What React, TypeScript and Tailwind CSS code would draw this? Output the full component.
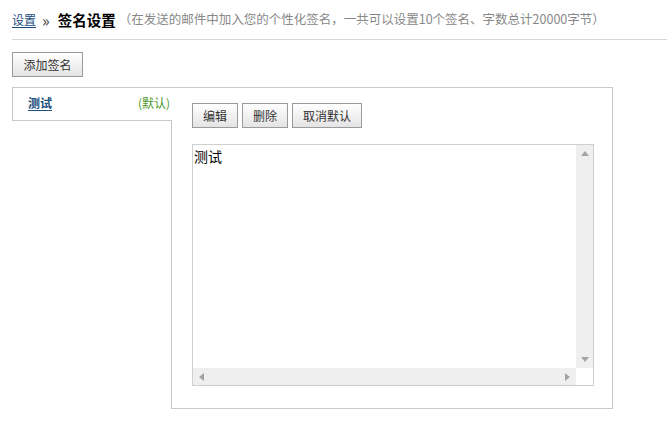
import React from 'react'

const font = { fontFamily: '"Noto Sans CJK SC", "Noto Sans", sans-serif' }

function Btn({ label, width }: { label: string; width: string }) {
  return (
    <button
      className={`${width} h-[25px] border border-[#9b9b9b] bg-linear-to-b from-white to-[#e4e4e4] text-[12px] leading-none text-[#333] flex items-center justify-center`}
    >
      {label}
    </button>
  )
}

function Arrow({ dir }: { dir: 'up' | 'down' | 'left' | 'right' }) {
  const pts = {
    up: '0,5 4,0 8,5',
    down: '0,0 8,0 4,5',
    left: '5,0 5,8 0,4',
    right: '0,0 0,8 5,4',
  }[dir]
  const vertical = dir === 'up' || dir === 'down'
  return (
    <svg width={vertical ? 8 : 5} height={vertical ? 5 : 8} viewBox={vertical ? '0 0 8 5' : '0 0 5 8'}>
      <polygon points={pts} fill="#a3a3a3" />
    </svg>
  )
}

export default function App() {
  return (
    <div className="w-[667px] h-[429px] bg-white text-[12px] text-[#333]" style={font}>
      {/* 标题 */}
      <div className="ml-[12px] h-[40px] flex items-center border-b border-[#d6d6d6]">
        <a className="text-[12px] text-[#1a4a7c] underline underline-offset-2">设置</a>
        <span className="ml-[6px] mr-[8px] text-[16px] leading-none text-[#444]">»</span>
        <span className="text-[14.5px] font-bold text-black">签名设置</span>
        <span className="ml-[3px] text-[12.5px] text-[#888]">
          （在发送的邮件中加入您的个性化签名，一共可以设置10个签名、字数总计20000字节）
        </span>
      </div>

      <div className="pl-[12px] pt-[12px]">
        <Btn label="添加签名" width="w-[71px]" />
      </div>

      {/* 签名列表 + 面板 */}
      <div className="ml-[12px] mt-[10px] flex">
        <div className="w-[160px] flex flex-col">
          <div className="h-[34px] border-t border-l border-b border-[#c8c8c8] flex items-center justify-between pl-[15px] pr-[2px] pb-[2px]">
            <a className="font-bold text-[12px] text-[#1d4f7d] underline underline-offset-2">测试</a>
            <span className="text-[12px] text-[#4f9a2b]">(默认)</span>
          </div>
          <div className="flex-1 border-r border-[#c8c8c8]" />
        </div>
        <div className="w-[441px] border-t border-r border-b border-[#c8c8c8] pt-[15px] pl-[20px] pb-[22px]">
          <div className="flex gap-[4px]">
            <Btn label="编辑" width="w-[46px]" />
            <Btn label="删除" width="w-[46px]" />
            <Btn label="取消默认" width="w-[70px]" />
          </div>
          <div className="mt-[16px] w-[402px] h-[242px] border border-[#cfcfcf] grid grid-cols-[1fr_17px] grid-rows-[1fr_17px]">
            <div className="text-[14px] leading-[20px] text-black pl-[1px] pt-[1px]">测试</div>
            <div className="bg-[#efefef] flex flex-col items-center justify-between py-[6px]">
              <Arrow dir="up" />
              <Arrow dir="down" />
            </div>
            <div className="bg-[#efefef] flex items-center justify-between px-[6px]">
              <Arrow dir="left" />
              <Arrow dir="right" />
            </div>
            <div className="bg-white" />
          </div>
        </div>
      </div>
    </div>
  )
}
